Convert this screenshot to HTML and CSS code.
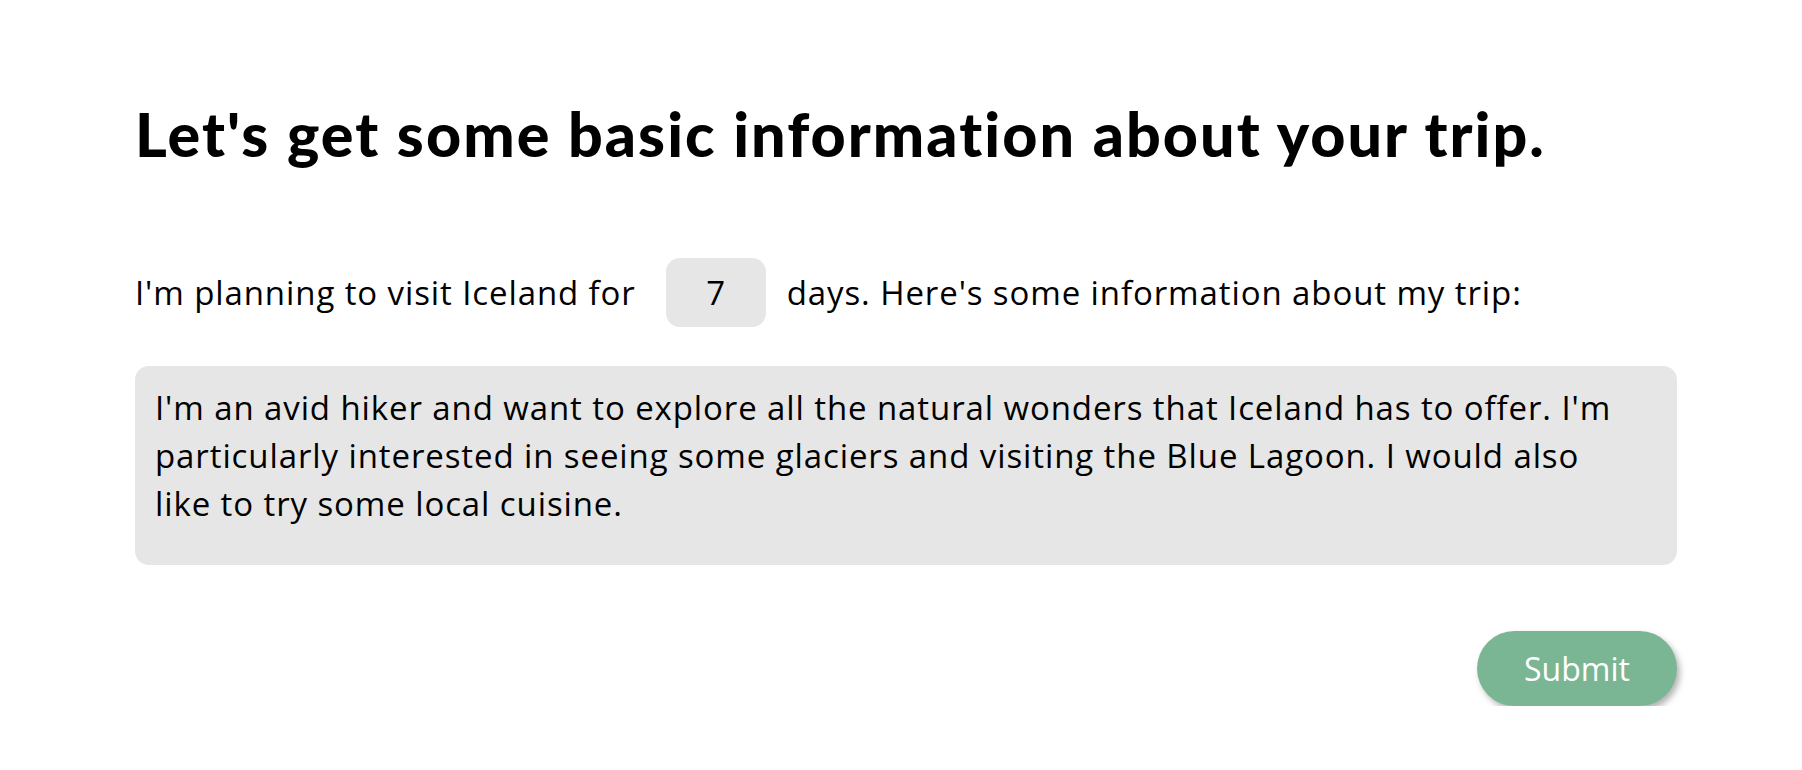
FILE: index.html
```html
<!DOCTYPE html>
<html lang="en">
<head>
<meta charset="utf-8">
<title>Trip information</title>
<link rel="stylesheet" href="styles.css">
</head>
<body>
<main class="page">
  <h1 class="title">Let's get some basic information about your trip.</h1>
  <div class="days-row">
    <span class="label">I'm planning to visit Iceland for</span>
    <input class="days-input" type="text" value="7" aria-label="Number of days">
    <span class="label">days. Here's some information about my trip:</span>
  </div>
  <textarea class="notes" aria-label="Trip details">I'm an avid hiker and want to explore all the natural wonders that Iceland has to offer. I'm particularly interested in seeing some glaciers and visiting the Blue Lagoon. I would also like to try some local cuisine.</textarea>
  <div class="actions">
    <button class="submit" type="button">Submit</button>
  </div>
</main>
</body>
</html>
```

FILE: styles.css
```css
* { box-sizing: border-box; }

html, body {
  margin: 0;
  padding: 0;
  background: #ffffff;
}

body {
  font-family: "Open Sans", Lato, "Liberation Sans", sans-serif;
  color: #000000;
  font-variant-ligatures: none;
}

.page {
  width: 1542px;
  margin-left: 135px;
  padding-top: 92px;
  display: flex;
  flex-direction: column;
}

.title {
  margin: 0;
  font-family: Lato, "Open Sans", sans-serif;
  font-size: 61px;
  font-weight: 900;
  line-height: 84px;
  letter-spacing: 2.05px;
}

.days-row {
  display: flex;
  align-items: center;
  margin-top: 82px;
  font-size: 33px;
  line-height: 48px;
  letter-spacing: 0.9px;
}

.days-input {
  width: 100px;
  height: 69px;
  margin: 0 21px 0 30px;
  border: none;
  border-radius: 14px;
  background: #e6e6e6;
  font-family: inherit;
  font-size: 33px;
  color: #000;
  text-align: center;
  outline: none;
  padding: 0;
}

.notes {
  margin-top: 39px;
  width: 100%;
  height: 199px;
  padding: 18px 50px 18px 20px;
  border: none;
  border-radius: 14px;
  background: #e6e6e6;
  font-family: inherit;
  font-size: 33px;
  line-height: 48px;
  letter-spacing: 0.9px;
  color: #000;
  resize: none;
  outline: none;
  overflow: hidden;
  font-variant-ligatures: none;
}

.actions {
  display: flex;
  justify-content: flex-end;
  margin-top: 66px;
}

.submit {
  width: 200px;
  height: 75px;
  border: none;
  border-radius: 38px;
  background: #7ab694;
  color: #ffffff;
  font-family: inherit;
  font-size: 32px;
  box-shadow: 3px 4px 6px rgba(0, 0, 0, 0.3);
  cursor: pointer;
}
```
